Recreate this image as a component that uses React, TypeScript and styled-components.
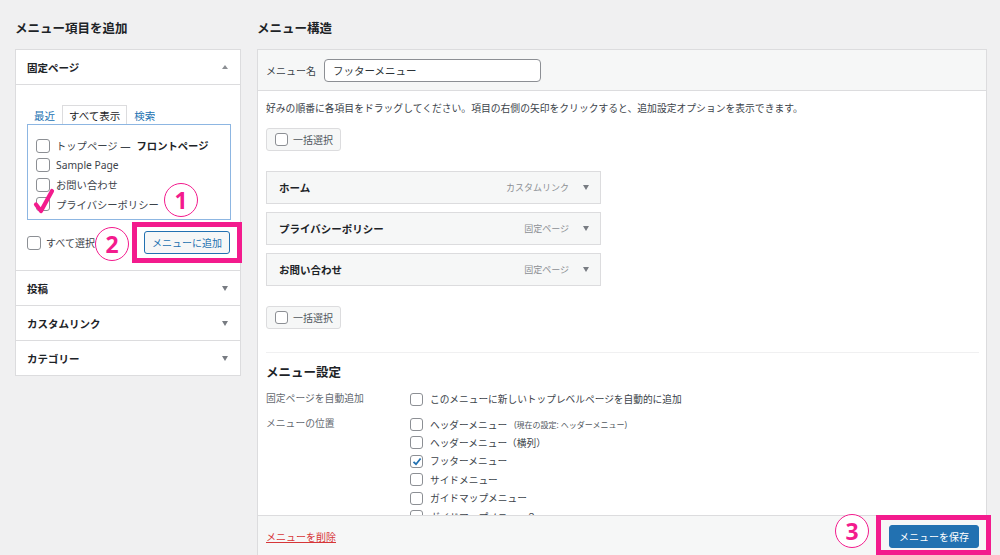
import React from "react";
import styled, { createGlobalStyle } from "styled-components";

const PINK = "#f31b8d";

const GlobalStyle = createGlobalStyle`
  html, body {
    margin: 0;
    padding: 0;
    background: #f0f0f1;
  }
  body {
    font-family: "Noto Sans", "Noto Sans CJK JP", sans-serif;
    color: #3c434a;
  }
`;

const Page = styled.div`
  position: relative;
  display: flex;
  gap: 16px;
  height: 555px;
  padding: 0 13px 0 15px;
  box-sizing: border-box;
  overflow: hidden;
`;

const LeftColumn = styled.div`
  width: 226px;
  flex: none;
`;

const RightColumn = styled.div`
  flex: 1;
  min-width: 0;
`;

const Heading = styled.h2`
  margin: 0;
  height: 49px;
  padding-top: 5px;
  box-sizing: border-box;
  display: flex;
  align-items: center;
  font-size: 12.5px;
  font-weight: 700;
  color: #1d2327;
`;

const Panel = styled.div`
  background: #fff;
  border: 1px solid #dcdcde;
`;

const SectionHeader = styled.div<{ $open?: boolean }>`
  height: 34px;
  display: flex;
  align-items: center;
  justify-content: space-between;
  padding: 0 12px 0 11px;
  font-size: 10.5px;
  font-weight: 700;
  color: #1d2327;
  border-top: ${(p) => (p.$open ? "none" : "1px solid #dcdcde")};
  border-bottom: ${(p) => (p.$open ? "1px solid #dcdcde" : "none")};
`;

const Caret = styled.span<{ $up?: boolean }>`
  width: 0;
  height: 0;
  border-left: 3.5px solid transparent;
  border-right: 3.5px solid transparent;
  ${(p) =>
    p.$up
      ? "border-bottom: 4px solid #8c8f94;"
      : "border-top: 5px solid #787c82;"}
`;

const SectionBody = styled.div`
  padding: 20px 9px 16px 11px;
`;

const Tabs = styled.div`
  display: flex;
  height: 19px;
  align-items: stretch;
`;

const Tab = styled.span<{ $active?: boolean }>`
  display: flex;
  align-items: center;
  padding: 0 6px;
  font-size: 10.5px;
  color: ${(p) => (p.$active ? "#1d2327" : "#2271b1")};
  background: #fff;
  border: 1px solid ${(p) => (p.$active ? "#dcdcde" : "transparent")};
  border-bottom: none;
`;

const ListBox = styled.div`
  height: 96px;
  box-sizing: border-box;
  border: 1px solid #8db6e2;
  padding: 11px 8px 0;
`;

const ListItem = styled.label`
  display: flex;
  align-items: center;
  gap: 6px;
  height: 19.5px;
  font-size: 10.3px;
  color: #3c434a;
  white-space: nowrap;
`;

const Strong = styled.b`
  font-weight: 700;
  color: #1d2327;
`;

const Check = styled.span<{ $size?: number }>`
  position: relative;
  flex: none;
  display: inline-flex;
  align-items: center;
  justify-content: center;
  width: ${(p) => p.$size ?? 13}px;
  height: ${(p) => p.$size ?? 13}px;
  box-sizing: border-box;
  border: 1px solid #8c8f94;
  border-radius: 3px;
  background: #fff;
`;

const PinkMark = styled.svg`
  position: absolute;
  left: -4px;
  top: -10px;
  width: 22px;
  height: 26px;
`;

const SelectAllRow = styled.div`
  margin-top: 11px;
  height: 23px;
  display: flex;
  align-items: center;
  justify-content: space-between;
  padding-right: 1px;
`;

const SelectAll = styled.label`
  display: flex;
  align-items: center;
  gap: 5px;
  font-size: 10px;
  color: #3c434a;
`;

const Button = styled.button<{ $primary?: boolean }>`
  position: relative;
  height: 23px;
  padding: 0 ${(p) => (p.$primary ? 9 : 7)}px;
  font-family: inherit;
  font-size: 10px;
  border-radius: 3px;
  border: 1px solid #2271b1;
  color: ${(p) => (p.$primary ? "#fff" : "#2271b1")};
  background: ${(p) => (p.$primary ? "#2271b1" : "#f6f7f7")};
  cursor: pointer;
`;

const Highlight = styled.div<{ $t: number; $r: number; $b: number; $l: number }>`
  position: relative;
  display: flex;
  &::after {
    content: "";
    position: absolute;
    top: ${(p) => -p.$t}px;
    right: ${(p) => -p.$r}px;
    bottom: ${(p) => -p.$b}px;
    left: ${(p) => -p.$l}px;
    border: 5px solid ${PINK};
    pointer-events: none;
  }
`;

const StepBadge = styled.div<{ $x: number; $y: number }>`
  position: absolute;
  left: ${(p) => p.$x - 17}px;
  top: ${(p) => p.$y - 17}px;
  width: 34px;
  height: 34px;
  box-sizing: border-box;
  border-radius: 50%;
  border: 1.8px solid ${PINK};
  background: #fff;
  color: ${PINK};
  display: flex;
  align-items: center;
  justify-content: center;
  font-family: "Noto Sans", sans-serif;
  font-size: 23px;
  font-weight: 700;
  line-height: 1;
  z-index: 2;
`;

/* right side */

const MenuPanel = styled.div`
  height: 508px;
  box-sizing: border-box;
  display: flex;
  flex-direction: column;
  background: #fff;
  border: 1px solid #dcdcde;
`;

const NameBar = styled.div`
  height: 41px;
  flex: none;
  box-sizing: border-box;
  display: flex;
  align-items: center;
  gap: 8px;
  padding: 0 8px;
  background: #f6f7f7;
  border-bottom: 1px solid #dcdcde;
  font-size: 10px;
  color: #3c434a;
`;

const NameInput = styled.div`
  width: 217px;
  height: 23px;
  box-sizing: border-box;
  display: flex;
  align-items: center;
  padding: 0 8px;
  background: #fff;
  border: 1px solid #8c8f94;
  border-radius: 4px;
  font-size: 10.5px;
  color: #2c3338;
`;

const Body = styled.div`
  flex: 1;
  min-height: 0;
  overflow: hidden;
  padding: 10px 6px 0 8px;
`;

const Description = styled.p`
  margin: 0;
  line-height: 16px;
  font-size: 9.8px;
  color: #3c434a;
`;

const BulkButton = styled.div<{ $top: number }>`
  margin-top: ${(p) => p.$top}px;
  width: 75px;
  height: 23px;
  box-sizing: border-box;
  display: flex;
  align-items: center;
  gap: 5px;
  padding-left: 8px;
  background: #f6f7f7;
  border: 1px solid #dcdcde;
  border-radius: 3px;
  font-size: 10px;
  color: #50575e;
`;

const MenuList = styled.div`
  margin-top: 20px;
  width: 335px;
  display: flex;
  flex-direction: column;
  gap: 8px;
`;

const MenuItem = styled.div`
  height: 33px;
  box-sizing: border-box;
  display: flex;
  align-items: center;
  padding: 0 11px 0 12px;
  background: #f6f7f7;
  border: 1px solid #dcdcde;
  font-size: 10.5px;
  font-weight: 700;
  color: #1d2327;
`;

const ItemType = styled.span`
  margin-left: auto;
  margin-right: 14px;
  font-size: 9px;
  font-weight: 400;
  color: #8c8f94;
`;

const Settings = styled.div`
  margin-top: 23px;
  margin-right: 1px;
  border-top: 1px solid #f0f0f1;
  padding-top: 11px;
`;

const SettingsTitle = styled.h3`
  margin: 0;
  line-height: 18px;
  font-size: 12.5px;
  font-weight: 700;
  color: #1d2327;
`;

const SettingsGrid = styled.div`
  margin-top: 8px;
  display: grid;
  grid-template-columns: 144px 1fr;
  row-gap: 7px;
`;

const SettingLabel = styled.div`
  line-height: 18px;
  font-size: 9.8px;
  color: #646970;
`;

const Options = styled.div`
  display: flex;
  flex-direction: column;
`;

const Option = styled.label`
  height: 18.4px;
  display: flex;
  align-items: center;
  gap: 7px;
  font-size: 9.7px;
  color: #3c434a;
`;

const Note = styled.span`
  font-size: 8px;
  color: #50575e;
`;

const Footer = styled.div`
  height: 41px;
  flex: none;
  box-sizing: border-box;
  display: flex;
  align-items: center;
  justify-content: space-between;
  padding: 0 7px 0 8px;
  background: #f6f7f7;
  border-top: 1px solid #dcdcde;
`;

const DeleteLink = styled.a`
  font-size: 10px;
  color: #d63638;
  text-decoration: underline;
`;

const BlueTick = () => (
  <svg width="10" height="9" viewBox="0 0 10 9">
    <path d="M1.5 4.8 L4 7.2 L8.6 1.5" fill="none" stroke="#2271b1" strokeWidth="1.8" />
  </svg>
);

const pages = [
  { label: <>トップページ — <Strong>フロントページ</Strong></> },
  { label: <>Sample Page</> },
  { label: <>お問い合わせ</> },
  { label: <>プライバシーポリシー</>, marked: true },
];

const menuItems = [
  { title: "ホーム", type: "カスタムリンク" },
  { title: "プライバシーポリシー", type: "固定ページ" },
  { title: "お問い合わせ", type: "固定ページ" },
];

const locations = [
  { label: <>ヘッダーメニュー <Note>(現在の設定: ヘッダーメニュー)</Note></> },
  { label: <>ヘッダーメニュー（横列）</> },
  { label: <>フッターメニュー</>, checked: true },
  { label: <>サイドメニュー</> },
  { label: <>ガイドマップメニュー</> },
  { label: <>ガイドマップメニュー２</> },
];

const App: React.FC = () => {
  return (
    <>
      <GlobalStyle />
      <Page>
        <LeftColumn>
          <Heading>メニュー項目を追加</Heading>
          <Panel>
            <SectionHeader $open>
              固定ページ
              <Caret $up />
            </SectionHeader>
            <SectionBody>
              <Tabs>
                <Tab>最近</Tab>
                <Tab $active>すべて表示</Tab>
                <Tab>検索</Tab>
              </Tabs>
              <ListBox>
                {pages.map((page, i) => (
                  <ListItem key={i}>
                    <Check $size={14}>
                      {page.marked && (
                        <PinkMark viewBox="0 0 22 26">
                          <path
                            d="M3 16.5 L8 23 L19 3"
                            fill="none"
                            stroke={PINK}
                            strokeWidth="4.2"
                            strokeLinecap="round"
                            strokeLinejoin="round"
                          />
                        </PinkMark>
                      )}
                    </Check>
                    {page.label}
                  </ListItem>
                ))}
              </ListBox>
              <SelectAllRow>
                <SelectAll>
                  <Check $size={14} />
                  すべて選択
                </SelectAll>
                <Highlight $t={9} $r={12} $b={9} $l={12}>
                  <Button>メニューに追加</Button>
                </Highlight>
              </SelectAllRow>
            </SectionBody>
            <SectionHeader>
              投稿
              <Caret />
            </SectionHeader>
            <SectionHeader>
              カスタムリンク
              <Caret />
            </SectionHeader>
            <SectionHeader>
              カテゴリー
              <Caret />
            </SectionHeader>
          </Panel>
        </LeftColumn>

        <RightColumn>
          <Heading>メニュー構造</Heading>
          <MenuPanel>
            <NameBar>
              メニュー名
              <NameInput>フッターメニュー</NameInput>
            </NameBar>
            <Body>
              <Description>
                好みの順番に各項目をドラッグしてください。項目の右側の矢印をクリックすると、追加設定オプションを表示できます。
              </Description>
              <BulkButton $top={11}>
                <Check $size={13} />
                一括選択
              </BulkButton>
              <MenuList>
                {menuItems.map((item) => (
                  <MenuItem key={item.title}>
                    {item.title}
                    <ItemType>{item.type}</ItemType>
                    <Caret />
                  </MenuItem>
                ))}
              </MenuList>
              <BulkButton $top={20}>
                <Check $size={13} />
                一括選択
              </BulkButton>
              <Settings>
                <SettingsTitle>メニュー設定</SettingsTitle>
                <SettingsGrid>
                  <SettingLabel>固定ページを自動追加</SettingLabel>
                  <Options>
                    <Option>
                      <Check />
                      このメニューに新しいトップレベルページを自動的に追加
                    </Option>
                  </Options>
                  <SettingLabel>メニューの位置</SettingLabel>
                  <Options>
                    {locations.map((loc, i) => (
                      <Option key={i}>
                        <Check>{loc.checked && <BlueTick />}</Check>
                        {loc.label}
                      </Option>
                    ))}
                  </Options>
                </SettingsGrid>
              </Settings>
            </Body>
            <Footer>
              <DeleteLink>メニューを削除</DeleteLink>
              <Highlight $t={10} $r={12} $b={7} $l={13}>
                <Button $primary>メニューを保存</Button>
              </Highlight>
            </Footer>
          </MenuPanel>
        </RightColumn>

        <StepBadge $x={181} $y={200}>1</StepBadge>
        <StepBadge $x={112} $y={244}>2</StepBadge>
        <StepBadge $x={852} $y={531}>3</StepBadge>
      </Page>
    </>
  );
};

export default App;
